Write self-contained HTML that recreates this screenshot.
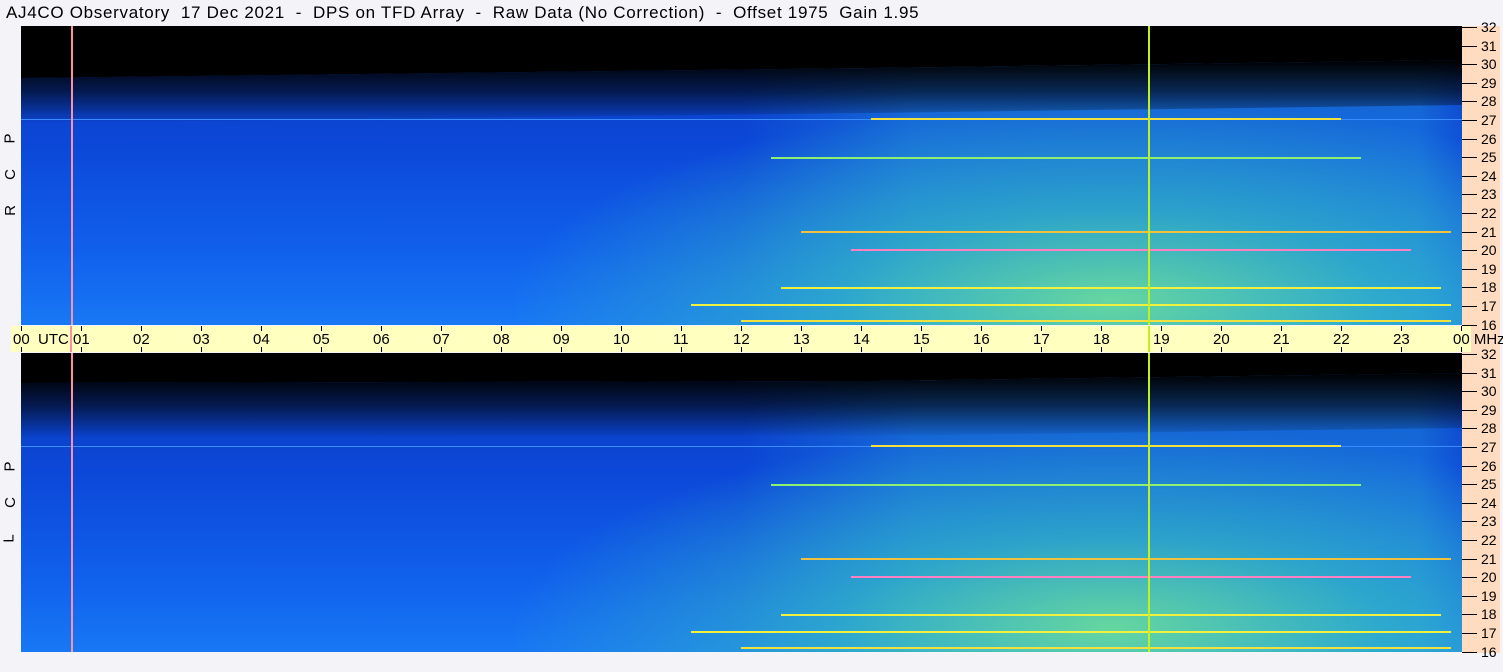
<!DOCTYPE html>
<html><head><meta charset="utf-8"><style>
*{margin:0;padding:0}
body{width:1503px;height:672px;background:#f4f4f8;position:relative;overflow:hidden;font-family:"Liberation Sans",sans-serif;}
.a{position:absolute}
.title{left:6px;top:3px;font-size:17px;letter-spacing:0.7px;color:#000;white-space:pre}
.panel{position:absolute;left:21px;width:1441px;height:299px;overflow:hidden;background:#0b3fd0}
.panel .l{position:absolute;left:0;right:0}
.side{position:absolute;left:1462px;top:26px;width:38px;height:627px;background:#ffdcc0}
.tick{position:absolute;left:1462px;width:15px;height:1px;background:#000}
.num{position:absolute;left:1481px;font-size:14px;color:#000;line-height:14px}
.band{position:absolute;left:11px;top:326px;width:1460px;height:26px;background:#ffffc0}
.h{position:absolute;top:331px;font-size:15px;color:#000}
.ht{position:absolute;width:1px;background:#000}
.lab{position:absolute;left:5px;font-size:15px;transform:rotate(-90deg);color:#000}
svg{position:absolute;left:0;top:0}
</style></head><body>
<div class="a title">AJ4CO Observatory  17 Dec 2021  -  DPS on TFD Array  -  Raw Data (No Correction)  -  Offset 1975  Gain 1.95</div>
<div class="side"></div>

<div id="p1" class="panel" style="top:26px"></div>
<div id="p2" class="panel" style="top:353px"></div>

<div class="band"></div>
<div class="a" style="left:70px;top:326px;width:2px;height:26px;background:#ff90a0"></div>
<div class="a" style="left:1148px;top:326px;width:2px;height:26px;background:#c0f020"></div>
<div id="ax"></div>

<div class="lab" style="top:130px">P</div>
<div class="lab" style="top:166px">C</div>
<div class="lab" style="top:202px">R</div>
<div class="lab" style="top:458px">P</div>
<div class="lab" style="top:494px">C</div>
<div class="lab" style="top:530px">L</div>

<script>
function panel(id,bl,br,fade){
 var h='<div class="l" style="top:0;height:299px;background:linear-gradient(180deg,#0838b8 0%,#0c48d8 40%,#1060ec 75%,#1878f4 100%)"></div>'+
 '<div class="l" style="top:0;height:299px;background:linear-gradient(90deg,rgba(40,170,230,0) 50%,rgba(40,170,230,.35) 62%,rgba(40,170,230,.35) 97%,rgba(40,170,230,.1) 100%)"></div>'+
 '<div class="l" style="top:0;height:299px;background:radial-gradient(ellipse 600px 200px at 1090px 275px,rgba(120,235,140,.8),rgba(60,200,180,.55) 45%,rgba(20,120,230,0) 100%)"></div>'+
 '<svg width="1441" height="299"><defs><linearGradient id="g'+id+'" x1="0" y1="0" x2="0" y2="1"><stop offset="0" stop-color="#000" stop-opacity="1"/><stop offset="0.5" stop-color="#000" stop-opacity=".6"/><stop offset="1" stop-color="#000" stop-opacity="0"/></linearGradient></defs>'+
 '<polygon points="0,0 1441,0 1441,'+br+' 850,'+(br+8)+' 0,'+bl+'" fill="#000"/>'+
 '<polygon points="0,'+bl+' 850,'+(br+8)+' 1441,'+br+' 1441,'+(br+fade)+' 850,'+(br+8+fade)+' 0,'+(bl+fade)+'" fill="url(#g'+id+')"/></svg>'+
 '<div class="l" style="top:93px;height:1px;background:#3a8cff"></div>'+
 '<div class="a" style="left:850px;top:92px;width:470px;height:2px;background:#f0e040"></div>'+
 '<div class="a" style="left:750px;top:131px;width:590px;height:2px;background:#8ef070"></div>'+
 '<div class="a" style="left:780px;top:205px;width:650px;height:2px;background:#f0c040"></div>'+
 '<div class="a" style="left:830px;top:223px;width:560px;height:2px;background:#ff80c0"></div>'+
 '<div class="a" style="left:760px;top:261px;width:660px;height:2px;background:#f0f040"></div>'+
 '<div class="a" style="left:670px;top:278px;width:760px;height:2px;background:#f0f040"></div>'+
 '<div class="a" style="left:720px;top:294px;width:710px;height:2px;background:#f0e040"></div>'+
 '<div class="a" style="left:50px;top:0;width:2px;height:299px;background:#ff90a0"></div>'+
 '<div class="a" style="left:1127px;top:0;width:2px;height:299px;background:#c0f020"></div>';
 document.getElementById(id).innerHTML=h;}
panel('p1',52,34,45);
panel('p2',30,20,55);
var ax=document.getElementById('ax'),s='';
for(var i=0;i<=24;i++){var x=21+i*60;
 s+='<div class="ht" style="left:'+x+'px;top:326px;height:5px"></div><div class="ht" style="left:'+x+'px;top:347px;height:5px"></div>';
 var t=i==24?'00 MHz':(i<10?'0'+i:''+i);
 if(i==0)t='00  UTC';
 s+='<div class="h" style="left:'+(x-8)+'px;white-space:pre">'+t+'</div>';}
for(var p=0;p<2;p++){var base=p?353:26;
 for(var f=32;f>=16;f--){var y=Math.round(base+1+(32-f)*18.6);
  s+='<div class="tick" style="top:'+y+'px"></div><div class="num" style="top:'+(y-7)+'px">'+f+'</div>';}}
ax.innerHTML=s;
</script>
</body></html>
